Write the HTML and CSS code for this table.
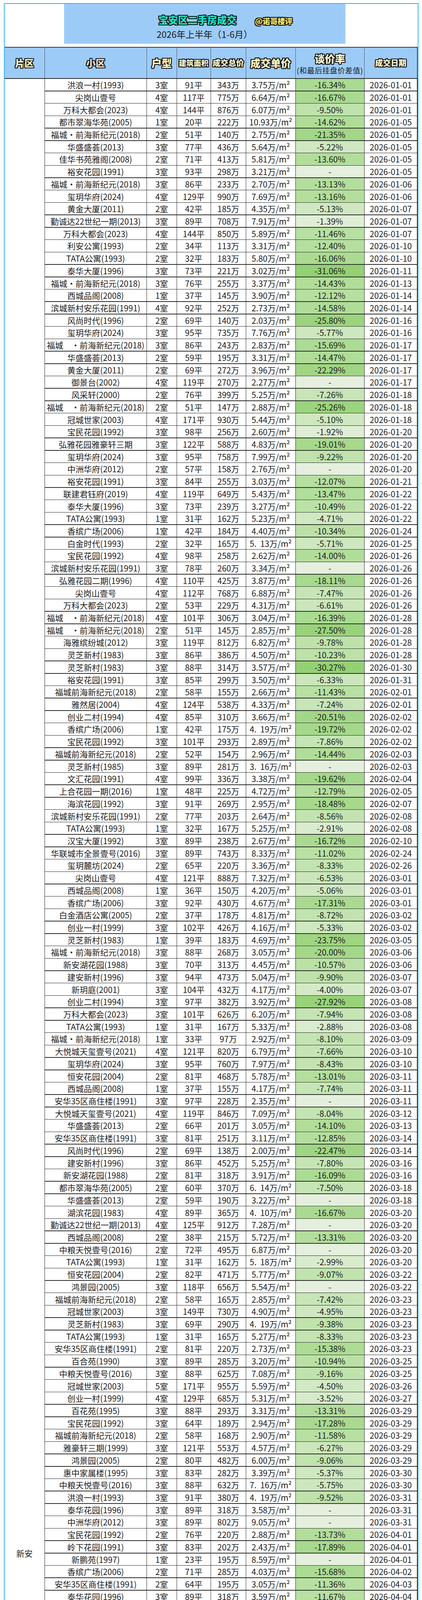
FILE: index.html
```html
<!DOCTYPE html>
<html lang="zh-CN">
<head>
<meta charset="utf-8">
<title>宝安区二手房成交</title>
<link rel="stylesheet" href="styles.css">
</head>
<body>
<div class="frame">
  <div class="title-area">
    <div class="title-box">
      <div class="title-line">
        <span class="title">宝安区二手房成交</span>
        <span class="handle">@诺哥楼评</span>
      </div>
      <div class="subtitle">2026年上半年（1-6月）</div>
    </div>
  </div>
  <div class="head">
    <div class="hc"><span class="hl h-pian">片区</span></div>
    <div class="hc"><span class="hl h-xiao">小区</span></div>
    <div class="hc"><span class="hl h-hu">户型</span></div>
    <div class="hc"><span class="hl h-mj">建筑面积</span></div>
    <div class="hc"><span class="hl h-zj">成交总价</span></div>
    <div class="hc"><span class="hl h-dj">成交单价</span></div>
    <div class="hc hc-rate"><span class="hl h-tj">谈价率</span><span class="h-sub">(和最后挂盘价差值)</span></div>
    <div class="hc"><span class="hl h-rq">成交日期</span></div>
  </div>
  <div class="grid" id="grid"></div>
</div>
<script src="script.js"></script>
</body>
</html>
```

FILE: styles.css
```css
html, body {
  margin: 0;
  padding: 0;
  background: #ffffff;
}
body {
  font-family: "Noto Sans CJK SC", "Noto Sans", "DejaVu Sans", sans-serif;
  color: #1c1c1c;
}
.frame {
  margin: 8px 0 0 9.5px;
  width: 1057px;
  border: 2.5px solid #36b5e8;
  background: #ffffff;
}
.title-area {
  height: 110px;
  background: #ffffff;
}
.title-box {
  margin-left: 152px;
  width: 720px;
  height: 102px;
  background: #9dcbf8;
  display: flex;
  flex-direction: column;
}
.title-line {
  display: flex;
  align-items: flex-start;
  padding: 25px 0 0 242px;
  height: 32px;
}
.title {
  font-size: 25px;
  line-height: 30px;
  font-weight: 900;
  color: #22e2c6;
  text-shadow: -2px -2px 0 #111, 2px -2px 0 #111, -2px 2px 0 #111, 2px 2px 0 #111,
    0 -2px 0 #111, 0 2px 0 #111, -2px 0 0 #111, 2px 0 0 #111;
}
.handle {
  margin: 7px 0 0 47px;
  font-size: 19px;
  line-height: 24px;
  font-weight: 900;
  color: #f2ee6c;
  text-shadow: -2px -2px 0 #111, 2px -2px 0 #111, -2px 2px 0 #111, 2px 2px 0 #111,
    0 -2px 0 #111, 0 2px 0 #111, -2px 0 0 #111, 2px 0 0 #111;
}
.subtitle {
  margin-top: 5px;
  text-align: center;
  font-size: 23px;
  line-height: 30px;
  color: #1a1a1a;
}
.head {
  display: grid;
  grid-template-columns: 102px 259.5px 75.5px 85.5px 88.5px 125.5px 174.5px 134px;
  column-gap: 1.5px;
  height: 78px;
  background: #4c5862;
  border-top: 2px solid #2f3b47;
  border-bottom: 2px solid #2a2a2a;
  border-right: 1.5px solid #4c5862;
}
.hc {
  background: #9dcbf8;
  display: flex;
  flex-direction: column;
  align-items: center;
  justify-content: center;
  overflow: hidden;
}
.hl {
  font-weight: 900;
  color: #fff9cf;
  line-height: 1.2;
  white-space: nowrap;
  text-shadow: -2px -2px 0 #111, 2px -2px 0 #111, -2px 2px 0 #111, 2px 2px 0 #111,
    0 -2px 0 #111, 0 2px 0 #111, -2px 0 0 #111, 2px 0 0 #111;
}
.h-pian { font-size: 24px; color: #fffbc2; }
.h-xiao { font-size: 24px; color: #fbe1cc; }
.h-hu { font-size: 26px; color: #fdf6c2; }
.h-mj { font-size: 19px; }
.h-zj { font-size: 20px; }
.h-dj { font-size: 26px; color: #fef6c6; }
.h-tj { font-size: 26px; }
.h-rq { font-size: 20px; }
.hc-rate {
  justify-content: flex-start;
  padding-top: 12px;
}
.h-sub {
  margin-top: 3px;
  font-size: 19px;
  letter-spacing: 0.5px;
  line-height: 24px;
  white-space: nowrap;
  color: #1a1a1a;
}
.grid {
  display: grid;
  grid-template-columns: 102px 259.5px 75.5px 85.5px 88.5px 125.5px 174.5px 134px;
  grid-auto-rows: 30.22px;
  gap: 1.5px;
  background: #2b2b2b;
  border-right: 1.5px solid #2b2b2b;
  border-bottom: 1.5px solid #2b2b2b;
}
.c {
  background: #ffffff;
  display: flex;
  align-items: center;
  justify-content: center;
  font-size: 21px;
  line-height: 30px;
  color: #1c1c1c;
  white-space: pre;
  overflow: hidden;
}
.area {
  grid-column: 1;
}
```

FILE: script.js
```js
var D = `洪浪一村(1993)|3|91|343|3.75|16.34|01-01
尖岗山壹号|4|117|775|6.64|16.67|01-01
万科大都会(2023)|4|144|876|6.07|9.50|01-01
都市翠海华苑(2005)|1|20|222|10.93|14.62|01-05
福城·前海新纪元(2018)|2|51|140|2.75|21.35|01-05
华盛盛荟(2013)|3|77|436|5.64|5.22|01-05
佳华书苑雅阁(2008)|2|71|413|5.81|13.60|01-05
裕安花园(1991)|3|93|298|3.21||01-05
福城·前海新纪元(2018)|3|86|233|2.70|13.13|01-06
玺玥华府(2024)|4|129|990|7.69|13.16|01-06
黄金大厦(2011)|2|42|185|4.35|5.13|01-07
勤诚达22世纪一期(2013)|3|89|708|7.91|1.39|01-07
万科大都会(2023)|4|144|850|5.89|11.46|01-07
利安公寓(1993)|2|34|113|3.31|12.40|01-10
TATA公寓(1993)|2|32|183|5.80|16.06|01-10
泰华大厦(1996)|3|73|221|3.02|31.06|01-11
福城·前海新纪元(2018)|3|76|255|3.37|14.43|01-13
西城品阁(2008)|1|37|145|3.90|12.12|01-14
滨城新村安乐花园(1991)|4|92|252|2.73|14.58|01-14
风尚时代(1996)|2|69|140|2.03|25.80|01-16
玺玥华府(2024)|3|95|735|7.76|5.77|01-16
福城　·前海新纪元(2018)|3|86|243|2.83|15.69|01-17
华盛盛荟(2013)|2|59|195|3.31|14.47|01-17
黄金大厦(2011)|2|69|272|3.96|22.29|01-17
御景台(2002)|4|119|270|2.27||01-17
风采轩(2000)|2|76|399|5.25|7.26|01-18
福城　·前海新纪元(2018)|2|51|147|2.88|25.26|01-18
冠城世家(2003)|4|171|930|5.44|5.10|01-18
宝民花园(1992)|3|98|256|2.60|1.92|01-20
弘雅花园雅豪轩三期|3|122|588|4.83|19.01|01-20
玺玥华府(2024)|3|95|758|7.99|9.22|01-20
中洲华府(2012)|2|57|158|2.76||01-20
裕安花园(1991)|3|84|255|3.03|12.07|01-21
联建君钰府(2019)|4|119|649|5.43|13.47|01-22
泰华大厦(1996)|3|73|239|3.27|10.49|01-22
TATA公寓(1993)|1|31|162|5.23|4.71|01-22
香缤广场(2006)|1|42|184|4.40|10.34|01-24
白金时代(1993)|2|32|165|5.  13|5.71|01-25
宝民花园(1992)|4|98|258|2.62|14.00|01-26
滨城新村安乐花园(1991)|3|78|260|3.34||01-26
弘雅花园二期(1996)|4|110|425|3.87|18.11|01-26
尖岗山壹号|4|112|768|6.88|7.47|01-26
万科大都会(2023)|2|53|229|4.31|6.61|01-26
福城　·前海新纪元(2018)|4|101|306|3.04|16.39|01-28
福城　·前海新纪元(2018)|2|51|145|2.85|27.50|01-28
海雅缤纷城(2012)|3|119|812|6.82|9.78|01-28
灵芝新村(1983)|3|86|386|4.50|10.23|01-28
灵芝新村(1983)|3|88|314|3.57|30.27|01-30
裕安花园(1991)|3|85|299|3.50|6.33|01-31
福城前海新纪元(2018)|2|58|155|2.66|11.43|02-01
雅然居(2004)|4|124|538|4.33|7.24|02-01
创业二村(1994)|4|85|310|3.66|20.51|02-02
香缤广场(2006)|1|42|175|4.  19|19.72|02-02
宝民花园(1992)|3|101|293|2.89|7.86|02-02
福城前海新纪元(2018)|2|52|154|2.96|14.44|02-03
灵芝新村(1985)|3|89|281|3.  16||02-03
文汇花园(1991)|4|99|336|3.38|19.62|02-04
上合花园一期(2016)|1|48|225|4.72|12.79|02-05
海滨花园(1992)|3|91|269|2.95|18.48|02-07
滨城新村安乐花园(1991)|2|77|203|2.64|8.56|02-08
TATA公寓(1993)|1|32|167|5.25|2.91|02-08
汉宝大厦(1992)|3|89|238|2.67|16.72|02-10
华联城市全景壹号(2016)|3|89|743|8.33|11.02|02-24
玺玥麓坊(2024)|2|65|220|3.36|8.33|02-26
尖岗山壹号|4|121|888|7.32|6.53|03-01
西城品阁(2008)|1|36|150|4.20|5.06|03-01
香缤广场(2006)|3|92|430|4.67|17.31|03-01
白金酒店公寓(2005)|2|37|178|4.81|8.72|03-02
创业一村(1999)|3|102|426|4.16|5.33|03-02
灵芝新村(1983)|1|39|183|4.69|23.75|03-05
福城·前海新纪元(2018)|3|88|268|3.05|20.00|03-06
新安湖花园(1988)|3|70|313|4.45|10.57|03-06
建安新村(1996)|3|94|473|5.04|9.90|03-07
新玥庭(2001)|3|104|432|4.17|4.00|03-07
创业二村(1994)|3|97|382|3.92|27.92|03-08
万科大都会(2023)|3|101|626|6.20|7.94|03-08
TATA公寓(1993)|1|31|167|5.33|2.88|03-08
福城·前海新纪元(2018)|1|33|97|2.92|8.10|03-09
大悦城天玺壹号(2021)|4|121|820|6.79|7.66|03-10
玺玥华府(2024)|3|95|760|7.97|8.43|03-10
恒安花园(2004)|2|81|468|5.78|13.01|03-11
西城品阁(2008)|1|37|155|4.17|7.74|03-11
安华35区商住楼(1991)|3|97|228|2.35||03-11
大悦城天玺壹号(2021)|4|119|846|7.09|8.04|03-12
华盛盛荟(2013)|2|66|201|3.05|14.10|03-13
安华35区商住楼(1991)|3|81|251|3.11|12.85|03-14
风尚时代(1996)|2|69|138|2.00|22.47|03-14
建安新村(1996)|3|86|452|5.25|7.80|03-16
新安湖花园(1988)|2|81|318|3.91|16.09|03-16
都市翠海华苑(2005)|2|60|370|6.  14|7.50|03-18
华盛盛荟(2013)|2|59|190|3.22||03-18
湖滨花园(1983)|4|89|365|4.  10|16.67|03-20
勤诚达22世纪一期(2013)|4|125|912|7.28||03-20
西城品阁(2008)|2|38|215|5.72|13.31|03-20
中粮天悦壹号(2016)|2|72|495|6.87||03-20
TATA公寓(1993)|1|31|162|5.  18|2.99|03-20
恒安花园(2004)|2|82|471|5.77|9.07|03-22
鸿景园(2005)|3|118|656|5.54||03-22
福城前海新纪元(2018)|2|58|165|2.85|7.42|03-23
冠城世家(2003)|3|149|730|4.90|4.95|03-23
灵芝新村(1983)|3|69|290|4.  19|9.38|03-23
TATA公寓(1993)|1|31|165|5.27|8.33|03-23
安华35区商住楼(1991)|2|81|220|2.73|15.38|03-23
百合苑(1990)|3|89|285|3.20|10.94|03-25
中粮天悦壹号(2016)|3|88|625|7.08|9.16|03-25
冠城世家(2003)|5|171|955|5.59|4.50|03-26
创业一村(1999)|4|129|685|5.31|3.52|03-27
百花苑(1995)|3|88|293|3.31|13.31|03-29
宝民花园(1992)|3|64|189|2.94|17.28|03-29
福城前海新纪元(2018)|2|58|168|2.90|11.58|03-29
雅豪轩三期(1999)|3|121|553|4.57|6.27|03-29
鸿景园(2005)|2|80|482|6.00|9.06|03-29
惠中家属楼(1995)|3|83|282|3.39|5.37|03-30
中粮天悦壹号(2016)|3|88|632|7.  16|5.75|03-30
洪浪一村(1993)|3|91|380|4.  19|9.52|03-31
泰华花园(1996)|3|89|318|3.58||03-31
中洲华府(2012)|3|89|802|9.05||03-31
宝民花园(1992)|2|76|220|2.88|13.73|04-01
岭下花园(1991)|3|83|202|2.43|17.89|04-01
新鹏苑(1997)|1|23|195|8.59||04-01
香缤广场(2006)|2|71|285|4.03|15.68|04-02
安华35区商住楼(1991)|2|64|195|3.05|11.36|04-03
泰华花园(1996)|3|89|318|3.59|11.67|04-04
华盛盛荟(2013)|3|88|484|5.50|10.39|04-05
前进路西侧住宅(1995)|2|70|196|2.78|9.49|04-05
招商臻府(2022)|5|155|930|5.98||04-05
创业二村(1994)|3|97|390|4.01||04-06
创业二村(1994)|3|97|391|4.01|11.74|04-06
都市翠海华苑(2005)|1|22|218|9.93||04-06
洪浪一村(1993)|2|82|325|3.96|7.29|04-06
黄金大厦(2011)|1|47|207|4.38|22.18|04-06
新安湖花园(1988)|2|69|276|3.99|10.39|04-06
勤诚达22世纪二期(2016)|5|155|1250|8.06||04-07
香缤广场(2006)|2|62|290|4.68||04-08
黄金大厦(2011)|2|65|280|4.33|9.09|04-09
福城前海新纪元(2018)|1|33|93|2.82|15.45|04-10
华盛盛荟(2013)|2|59|195|3.31|27.78|04-11
勤诚达前海世界(2019)|3|90|610|6.80|11.08|04-11
鸿景园(2005)|3|118|656|5.54|8.89|04-12
雅然居(2004)|3|104|468|4.50|4.49|04-12
弘雅花园二期(1996)|2|74|245|3.30|11.87|04-13
文汇花园(1991)|3|84|297|3.56|5.71|04-14
文汇花园(1991)|3|90|318|3.52||04-15
鸿景园(2005)|4|119|725|6.09|4.35|04-16
中粮天悦壹号(2016)|4|125|970|7.78|10.19|04-16
雅豪轩三期(1999)|5|180|759|4.21|11.74|04-17
西城品阁(2008)|1|41|166|4.06|10.27|04-17
黄金大厦(2011)|2|48|192|4.03||04-18
雅然居(2004)|4|112|445|3.98|10.64|04-18
创业一村(1999)|3|102|455|4.44|14.19|04-19
风尚时代(1996)|1|33|80|2.39||04-20
雅豪轩三期(1999)|3|110|471|4.29||04-20
宝民花园(1992)|3|86|221|2.57||04-20
宝雅花园(1998)|3|100|489|4.89||04-20
黄金大厦(2011)|2|65|275|4.26||04-21
风尚时代(1996)|1|33|83|2.48||04-22
鸿景园(2005)|3|120|660|5.52||04-22
TATA公寓(1993)|1|31|163|5.  19||04-25
创业二村(1994)|3|98|350|3.59|14.63|04-26
31区水口花园(1990)|3|94|250|2.66|16.67|05-01
龙江一巷8号(1992)|3|90|315|3.49|4.55|05-01
雅豪轩三期(1999)|2|82|393|4.77|5.98|05-02
建安新村(1996)|3|93|478|5.  14|8.08|05-02
新安湖花园(1988)|2|69|272|3.94|11.69|05-02
大悦城天玺壹号(2021)|4|121|900|7.44|17.28|05-03
灵芝新村(1983)|2|76|310|4.  10|10.14|05-03
宝雅花园(1998)|3|111|512|4.61|21.23|05-04
创业一村(1999)|3|101|438|4.32|4.78|05-05
华盛盛荟(2013)|2|59|194|3.29|11.82|05-05
灵芝新村(1983)|3|91|340|3.75|20.93|05-05
新安湖花园(1988)|3|81|313|3.86|14.86|05-05
弘雅花园二期(1996)|4|129|541|4.20|8.15|05-06
建安新村(1996)|3|95|489|5.  17|11.13|05-07
灵芝新村(1983)|2|70|293|4.  18|2.98|05-07
TATA公寓(1993)|1|31|160|5.  12|4.76|05-08
洪浪十九区(1985)|3|68|275|4.03|11.29|05-13
黄金大厦(2011)|1|48|184|3.83|7.07|05-14
香缤广场(2006)|2|64|288|4.51|12.73|05-15
都市翠海华苑(2005)|1|19|218|11.32|2.24|05-16
福城前海新纪元(2018)|2|58|180|3.  10|10.00|05-16
冠城世家(2003)|2|80|515|6.44|8.04|05-16
建兴楼(1993)|3|72|265|3.68|26.39|05-16
新鹏苑(1997)|2|74|282|3.82|14.55|05-16
TATA公寓(1993)|1|31|164|5.23|18.25|05-16
白金酒店公寓(2005)|2|38|175|4.58|6.91|05-17
洪浪一村(1993)|3|89|330|3.72|17.55|05-17
尖岗山壹号|4|112|784|7.02|10.93|05-17
灵芝新村(1983)|3|86|306|3.57|8.66|05-19
冠城世家(2003)|3|149|760|5.  10||05-20
新安湖花园(1988)|3|96|480|4.99|14.29|05-23
都市翠海华苑(2005)|2|53|312|5.92|13.33|05-24
中粮天悦壹号(2016)|3|89|621|6.97|8.68|05-24
创业二村(1994)|3|97|368|3.79|10.24|05-25
洪浪一村(1993)|3|90|355|3.93|12.99|05-28
31区水口花园(1990)|3|93|240|2.57|13.67|05-28
灵芝新村前进市场(1997)|1|39|183|4.67|16.06|05-28
福城前海新纪元(2018)|1|35|98|2.80|9.26|05-29
华联城市全景壹号(2016)|3|90|746|8.31|6.63|05-29
TATA公寓(1993)|1|31|162|5.23|2.99|05-29
黄金大厦(2011)|1|48|191|4.01|9.05|05-30
尖岗山壹号|5|121|881|7.26|2.65|05-30
联建君钰府(2019)|3|89|462|5.21|11.15|05-30
灵芝新村(1983)|2|64|276|4.29|13.75|05-30
裕安花园(1991)|2|75|240|3.20|22.58|05-30
海雅缤纷城(2012)|1|50|305|6.04|4.69|05-31
建安新村(1996)|2|80|545|6.81|16.15|05-31
冠城世家(2003)|3|114|643|5.66|6.81|06-03
冠城世家(2003)|3|149|792|5.32||06-04
创业一村(1999)|3|101|384|3.79|28.62|06-06
万科大都会(2023)|4|122|778|6.39|6.27|06-06
品尚居(2011)|1|41|210|5.08|7.89|06-07
碧涛居(1998)|3|99|492|4.99|7.17|06-08
碧涛居(1998)|3|105|535|5.09|4.46|06-10
弘雅花园二期(1996)|2|59|210|3.56|17.65|06-10
创业二村(1994)|3|98|385|3.95|10.42|06-12
灵芝新村(1983)|3|76|290|3.84|13.43|06-12
鸿景园(2005)|3|121|645|5.34|7.86|06-14
尖岗山壹号|5|121|876|7.22|2.56|06-14
风采轩(2000)|3|107|492|4.62|8.55|06-20
碧涛居(1998)|2|77|369|4.76|18.00|06-22
创业二村(1994)|3|97|379|3.91|15.78|06-22
冠城世家(2003)|4|149|740|4.97|5.13|06-22
灵芝新村(1983)|2|52|206|3.96|6.59|06-22
创业一村(1999)|3|99|425|4.28|5.56|06-23
冠城世家(2003)|3|107|673|6.31|6.53|06-23
海滨花园(1992)|2|80|239|3.01|8.08|06-23
前海新纪元(2018)|2|58|177|3.06|7.05|06-24
洪浪十九区(1985)|3|85|350|4.  12|16.67|06-24
冠城世家(2003)|5|241|1400|5.80||06-25
湖景居(2000)|2|84|478|5.72|9.81|06-25
御景台(2002)|4|142|903|6.35|13.01|06-25
33区商住楼(1993)|3|105|245|2.34|12.50|06-25
勤诚达一期(2013)|3|81|635|7.86|5.93|06-27
雅然居(2004)|2|82|357|4.34|10.58|06-27
中洲华府(2012)|4|135|1050|7.80|11.02|06-27
湖景居(2000)|3|101|545|5.38|8.86|06-28
裕安楼(1996)|4|89|285|3.22|8.06|06-28
建安新村(1996)|4|107|581|5.44|7.81|06-29`;

var ANCHORS = [
  [0, [229, 239, 221]],
  [1.39, [224, 238, 214]],
  [5.13, [207, 232, 193]],
  [11.46, [184, 224, 162]],
  [16.06, [171, 219, 147]],
  [22, [160, 214, 132]],
  [31.06, [147, 209, 115]]
];

function rateColor(v) {
  if (v <= 0) return 'rgb(229,239,221)';
  for (var i = 1; i < ANCHORS.length; i++) {
    if (v <= ANCHORS[i][0] || i === ANCHORS.length - 1) {
      var a = ANCHORS[i - 1], b = ANCHORS[i];
      var t = Math.min(1, (v - a[0]) / (b[0] - a[0]));
      var c = a[1].map(function (x, k) { return Math.round(x + (b[1][k] - x) * t); });
      return 'rgb(' + c.join(',') + ')';
    }
  }
}

function cell(text, cls) {
  var d = document.createElement('div');
  d.className = 'c' + (cls ? ' ' + cls : '');
  d.textContent = text;
  return d;
}

var rows = D.trim().split('\n').map(function (l) { return l.split('|'); });
var grid = document.getElementById('grid');
var area = cell('新安', 'area');
area.style.gridRow = '1 / span ' + rows.length;
grid.appendChild(area);

rows.forEach(function (r) {
  grid.appendChild(cell(r[0]));
  grid.appendChild(cell(r[1] + '室'));
  grid.appendChild(cell(r[2] + '平'));
  grid.appendChild(cell(r[3] + '万'));
  grid.appendChild(cell(r[4] + '万/m²'));
  var v = r[5] === '' ? 0 : parseFloat(r[5]);
  var rc = cell(r[5] === '' ? '-' : '-' + r[5] + '%', 'rate');
  rc.style.background = rateColor(v);
  grid.appendChild(rc);
  grid.appendChild(cell('2026-' + r[6]));
});
```
